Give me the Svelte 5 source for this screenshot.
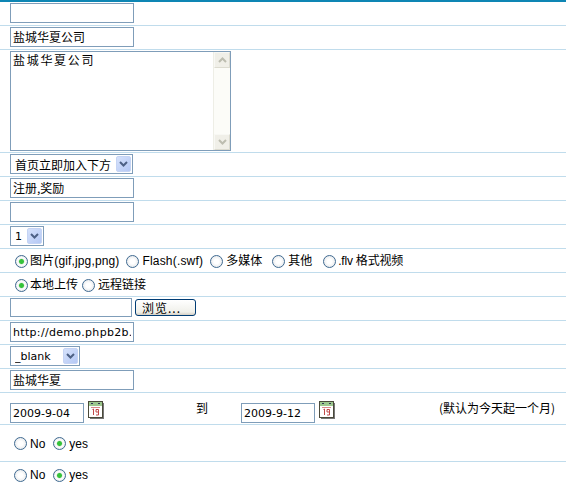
<script>
  const cjk = '盐城华夏公司';
</script>

<div class="form">
  <div class="row h24"><input class="txt" type="text" /></div>
  <div class="row h24"><input class="txt cjk" type="text" value={cjk} /></div>
  <div class="row area">
    <div class="areabox">
      <textarea value={cjk}></textarea>
      <div class="bar">
        <div class="sbtn"><svg width="9" height="6" viewBox="0 0 9 6"><path d="M1 5 L4.5 1.5 L8 5" /></svg></div>
        <div class="strack"></div>
        <div class="sbtn"><svg width="9" height="6" viewBox="0 0 9 6"><path d="M1 1 L4.5 4.5 L8 1" /></svg></div>
      </div>
    </div>
  </div>
  <div class="row h24">
    <div class="sel w123">
      <select class="cjk"><option>首页立即加入下方</option></select>
      <span class="arrow"><svg width="9" height="6" viewBox="0 0 9 6"><path d="M1 1 L4.5 4.5 L8 1" /></svg></span>
    </div>
  </div>
  <div class="row h24"><input class="txt cjk" type="text" value="注册,奖励" /></div>
  <div class="row h24"><input class="txt" type="text" /></div>
  <div class="row h24">
    <div class="sel w34">
      <select><option>1</option></select>
      <span class="arrow"><svg width="9" height="6" viewBox="0 0 9 6"><path d="M1 1 L4.5 4.5 L8 1" /></svg></span>
    </div>
  </div>
  <div class="row h24 radios types">
    <label class="first"><input type="radio" name="t" checked />图片(gif,jpg,png)</label>
    <label class="wide"><input type="radio" name="t" />Flash(.swf)</label>
    <label><input type="radio" name="t" />多媒体</label>
    <label class="m3"><input type="radio" name="t" />其他</label>
    <label class="m5"><input type="radio" name="t" />.flv 格式视频</label>
  </div>
  <div class="row h24 radios local">
    <label><input type="radio" name="u" checked />本地上传</label>
    <label class="remote"><input type="radio" name="u" />远程链接</label>
  </div>
  <div class="row h24 filerow">
    <input class="txt file" type="text" />
    <button type="button">浏览...</button>
  </div>
  <div class="row h24"><input class="txt url" type="text" value="http://demo.phpb2b.com/" /></div>
  <div class="row h24">
    <div class="sel w70">
      <select><option>_blank</option></select>
      <span class="arrow"><svg width="9" height="6" viewBox="0 0 9 6"><path d="M1 1 L4.5 4.5 L8 1" /></svg></span>
    </div>
  </div>
  <div class="row h24"><input class="txt cjk" type="text" value="盐城华夏" /></div>
  <div class="row dates">
    <div class="dgroup">
      <input class="txt date" type="text" value="2009-9-04" />
      {@render cal()}
    </div>
    <span class="to">到</span>
    <div class="dgroup second">
      <input class="txt date" type="text" value="2009-9-12" />
      {@render cal()}
    </div>
    <span class="note">(默认为今天起一个月)</span>
  </div>
  <div class="row h37 radios yn">
    <label><input type="radio" name="a" />No</label>
    <label><input type="radio" name="a" checked />yes</label>
  </div>
  <div class="row last radios yn">
    <label><input type="radio" name="b" />No</label>
    <label><input type="radio" name="b" checked />yes</label>
  </div>
</div>

{#snippet cal()}
  <svg class="cal" width="16" height="18" viewBox="0 0 16 18">
    <rect x="2" y="2" width="14" height="16" fill="#777" />
    <rect x="0.5" y="0.5" width="14" height="16" fill="#fff" stroke="#4a4a3a" />
    <rect x="1" y="1" width="13" height="4" fill="#9cc78e" />
    <rect x="3" y="2" width="2" height="1" fill="#335" />
    <rect x="10" y="2" width="2" height="1" fill="#335" />
    <rect x="3" y="6" width="9" height="1" fill="#d98a8a" />
    <path d="M4.5 8.5 L5.5 8 V14 M8 8.5 H10.5 V14 H8 M8 8.5 V11 H10.5" fill="none" stroke="#c24a4a" stroke-width="1" />
  </svg>
{/snippet}

<style>
  :global(body) {
    margin: 0;
    background: #fff;
  }
  .form {
    width: 566px;
    height: 485px;
    overflow: hidden;
    border-top: 2px solid #0e86b4;
    box-sizing: border-box;
    font-family: "Liberation Sans", "Noto Sans CJK SC", sans-serif;
    font-size: 12px;
    color: #000;
  }
  .row {
    box-sizing: border-box;
    border-bottom: 1px solid #c0dcec;
    padding-left: 10px;
    display: flex;
    align-items: flex-start;
  }
  .h24 {
    height: 24px;
    padding-top: 1px;
  }
  .txt {
    box-sizing: border-box;
    width: 124px;
    height: 20px;
    border: 1px solid #7f9db9;
    background: #fff;
    padding: 1px 2px;
    margin: 0;
    font-family: "DejaVu Sans", "Noto Sans CJK SC", sans-serif;
    font-size: 11px;
    color: #000;
    outline: none;
  }
  .txt.cjk {
    font-family: "Noto Sans CJK SC", sans-serif;
    font-size: 12px;
    padding: 0 2px 2px;
  }
  .url {
    letter-spacing: 0.32px;
  }
  .area {
    height: 103px;
    padding-top: 1px;
  }
  .areabox {
    box-sizing: border-box;
    width: 221px;
    height: 100px;
    border: 1px solid #7f9db9;
    display: flex;
  }
  textarea {
    flex: 1;
    min-width: 0;
    border: none;
    outline: none;
    resize: none;
    margin: 0;
    padding: 0 2px;
    font-family: "Noto Sans CJK SC", sans-serif;
    font-size: 12px;
    line-height: 15px;
    letter-spacing: 1.7px;
    overflow: hidden;
  }
  .bar {
    width: 17px;
    background: #fcfcf8;
    border-left: 1px solid #eeeee6;
    box-sizing: border-box;
    display: flex;
    flex-direction: column;
  }
  .sbtn {
    height: 16px;
    box-sizing: border-box;
    background: #f0efe8;
    border: 1px solid #f8f8f4;
    border-bottom-color: #dcdbd0;
    border-right-color: #dcdbd0;
    display: flex;
    align-items: center;
    justify-content: center;
  }
  .sbtn svg path {
    fill: none;
    stroke: #bdbdb0;
    stroke-width: 2;
  }
  .strack {
    flex: 1;
  }
  .sel {
    position: relative;
    height: 20px;
  }
  .w123 { width: 123px; }
  .w34 { width: 34px; }
  .w70 { width: 70px; }
  select {
    appearance: none;
    -webkit-appearance: none;
    box-sizing: border-box;
    width: 100%;
    height: 100%;
    border: 1px solid #7f9db9;
    border-radius: 0;
    background: #fff;
    padding: 0 0 0 4px;
    margin: 0;
    font-family: "DejaVu Sans", "Noto Sans CJK SC", sans-serif;
    font-size: 11px;
    color: #000;
    outline: none;
  }
  select.cjk {
    font-family: "Noto Sans CJK SC", sans-serif;
    font-size: 12px;
  }
  .arrow {
    position: absolute;
    right: 2px;
    top: 2px;
    width: 15px;
    height: 16px;
    box-sizing: border-box;
    background: linear-gradient(135deg, #d6e2fb, #b4c8f5);
    border: 1px solid #c5d4f4;
    border-radius: 2px;
    display: flex;
    align-items: center;
    justify-content: center;
  }
  .arrow path {
    fill: none;
    stroke: #4d6185;
    stroke-width: 2;
  }
  .radios {
    align-items: center;
    padding-left: 14px;
    padding-top: 1px;
    gap: 6px;
  }
  .radios label {
    display: flex;
    align-items: center;
    white-space: nowrap;
    line-height: 14px;
  }
  .radios input {
    appearance: none;
    -webkit-appearance: none;
    box-sizing: border-box;
    width: 13px;
    height: 13px;
    margin: 0 3px 0 1px;
    border-radius: 50%;
    border: 1px solid #3f6a91;
    background: radial-gradient(circle at 50% 50%, #fff 0 30%, #dcdfe2 100%);
    flex: none;
  }
  .radios input:checked {
    background: radial-gradient(circle at 50% 50%, #35c23a 0 2px, #e8efe8 3px, #fff 3.5px, #d4d8da 100%);
  }
  .radios .first input { margin-right: 2px; }
  .first { letter-spacing: 0.14px; }
  .wide { letter-spacing: 0.18px; }
  .types .m3 { margin-left: 3px; }
  .types .m5 { margin-left: 4px; letter-spacing: -0.2px; }
  .types .m5 input { margin-right: 2px; }
  .local { gap: 3px; }
  .local input { margin-right: 2px; }
  .radios.local .remote input { margin-right: 3px; }
  .filerow { gap: 3px; }
  .file { width: 122px; height: 19px; flex: none; }
  button {
    box-sizing: border-box;
    width: 61px;
    height: 17px;
    margin-top: 1px;
    padding: 0 0 0 6px;
    border: 1px solid #003c74;
    border-radius: 3px;
    background: linear-gradient(#fff, #f0f0ea 80%, #d6d0c5);
    font-family: "Noto Sans CJK SC", sans-serif;
    font-size: 12px;
    letter-spacing: 1px;
    line-height: 13px;
    color: #000;
    text-align: left;
    flex: none;
  }
  .dates {
    height: 32px;
    padding-top: 8px;
  }
  .dgroup {
    display: flex;
    align-items: flex-start;
    gap: 4px;
    width: 110px;
    flex: none;
  }
  .date {
    width: 74px;
    margin-top: 2px;
    flex: none;
  }
  .cal { flex: none; }
  .to {
    flex: none;
    width: 45px;
    margin-left: 76px;
    font-family: "Noto Sans CJK SC", sans-serif;
    line-height: 14px;
  }
  .dgroup.second { width: 198px; }
  .note {
    flex: none;
    font-family: "Noto Sans CJK SC", sans-serif;
    line-height: 14px;
    white-space: nowrap;
  }
  .h37 { height: 37px; }
  .last { height: 26px; }
  .yn {
    padding-left: 13px;
    gap: 7px;
  }
</style>
